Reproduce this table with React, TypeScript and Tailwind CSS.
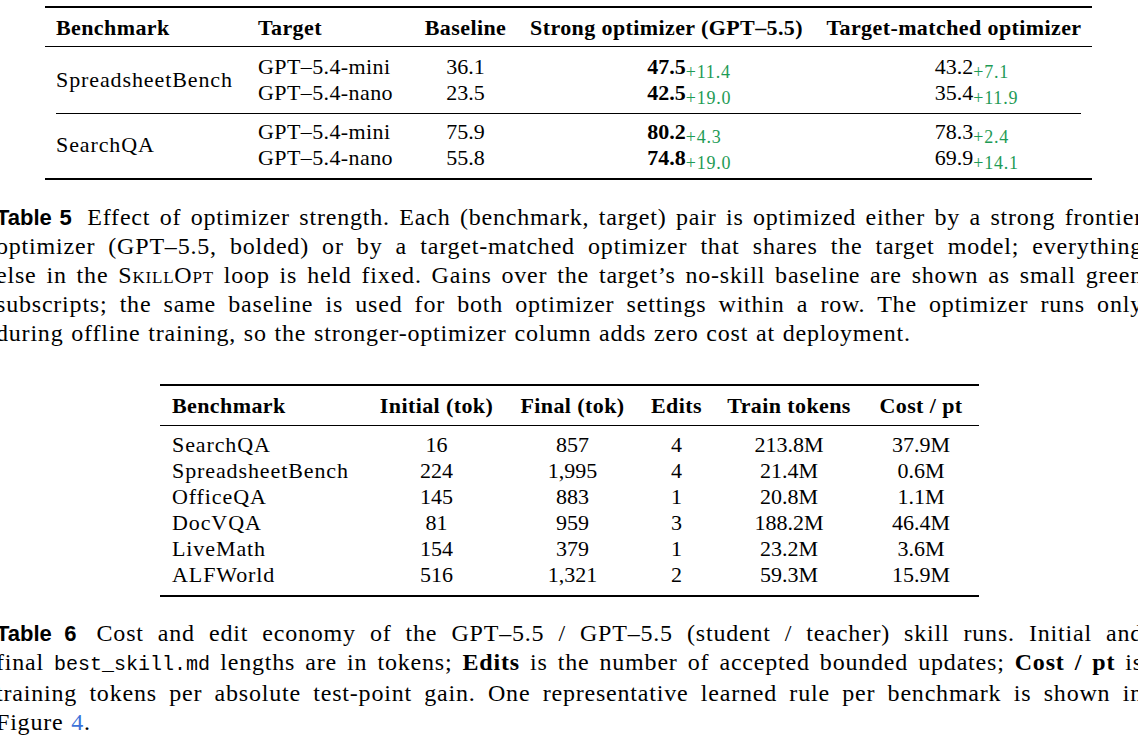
const serif = "font-['Liberation_Serif',serif]";

type Row5 = [string, string, string, string, string, string];

const table5: { bench: string; rows: Row5[] }[] = [
  {
    bench: "SpreadsheetBench",
    rows: [
      ["GPT–5.4-mini", "36.1", "47.5", "+11.4", "43.2", "+7.1"],
      ["GPT–5.4-nano", "23.5", "42.5", "+19.0", "35.4", "+11.9"],
    ],
  },
  {
    bench: "SearchQA",
    rows: [
      ["GPT–5.4-mini", "75.9", "80.2", "+4.3", "78.3", "+2.4"],
      ["GPT–5.4-nano", "55.8", "74.8", "+19.0", "69.9", "+14.1"],
    ],
  },
];

const table6 = [
  ["SearchQA", "16", "857", "4", "213.8M", "37.9M"],
  ["SpreadsheetBench", "224", "1,995", "4", "21.4M", "0.6M"],
  ["OfficeQA", "145", "883", "1", "20.8M", "1.1M"],
  ["DocVQA", "81", "959", "3", "188.2M", "46.4M"],
  ["LiveMath", "154", "379", "1", "23.2M", "3.6M"],
  ["ALFWorld", "516", "1,321", "2", "59.3M", "15.9M"],
];

const cols5 = "grid grid-cols-[201px_168px_103px_299px_276px]";
const cols6 = "grid grid-cols-[206px_141px_131px_77px_148px_116px]";

// number with a green gain hanging to the right (like \rlap)
function Gain({ value, gain, bold }: { value: string; gain: string; bold?: boolean }) {
  return (
    <span>
      <span className={bold ? "font-bold" : ""}>{value}</span>
      <span className="inline-block w-0 whitespace-nowrap align-[-4px] text-[18px] leading-none tracking-[0.8px] text-[#1e9b55]">
        {gain}
      </span>
    </span>
  );
}

function Line({ children, last }: { children: React.ReactNode; last?: boolean }) {
  return (
    <div
      className={
        "w-[1147px] -ml-[4px] whitespace-nowrap " +
        (last ? "text-left" : "text-justify [text-align-last:justify]")
      }
    >
      {children}
    </div>
  );
}

function Label({ children }: { children: React.ReactNode }) {
  return (
    <span className="mr-[6px] font-['Liberation_Sans',sans-serif] text-[22px] font-bold tracking-normal [word-spacing:0]">
      {children}
    </span>
  );
}

export default function App() {
  return (
    <div className={`w-[1138px] h-[750px] overflow-hidden bg-white text-black ${serif}`}>
      {/* Table 5 */}
      <div className="ml-[45px] w-[1047px] pt-[6px] text-[22px]">
        <div className="h-[2px] bg-black" />
        <div className={`${cols5} h-[38px] items-center font-bold tracking-[0.4px]`}>
          <div className="pl-[11px]">Benchmark</div>
          <div className="pl-[12px]">Target</div>
          <div className="text-center">Baseline</div>
          <div className="text-center">Strong optimizer (GPT–5.5)</div>
          <div className="text-center">Target-matched optimizer</div>
        </div>
        <div className="h-px bg-black" />
        {table5.map((g, gi) => (
          <div key={g.bench}>
            {gi > 0 && <div className="mx-[11px] h-px bg-black" />}
            <div
              className={`${cols5} auto-rows-[26px] leading-[26px] ${gi === 0 ? "pt-[7px] pb-[7px]" : "pt-[5px] pb-[7px]"}`}
            >
              <div className="row-span-2 flex items-center pl-[11px] tracking-[0.9px]">{g.bench}</div>
              {g.rows.map((r) => (
                <div key={r[0]} className="contents">
                  <div className="pl-[12px] tracking-[0.4px]">{r[0]}</div>
                  <div className="text-center">{r[1]}</div>
                  <div className="text-center">
                    <Gain value={r[2]} gain={r[3]} bold />
                  </div>
                  <div className="text-center">
                    <Gain value={r[4]} gain={r[5]} />
                  </div>
                </div>
              ))}
            </div>
          </div>
        ))}
        <div className="h-[2px] bg-black" />
      </div>

      {/* Caption 5 */}
      <div className="mt-[23px] text-[24px] leading-[29px] tracking-[0.8px] [word-spacing:1px]">
        <Line>
          <Label>Table 5</Label> Effect of optimizer strength. Each (benchmark, target) pair is optimized either by a strong frontier
        </Line>
        <Line>
          optimizer (GPT–5.5, bolded) or by a target-matched optimizer that shares the target model; everything
        </Line>
        <Line>
          else in the <span className="[font-variant-caps:small-caps]">SkillOpt</span> loop is held fixed. Gains over the target’s no-skill baseline are shown as small green
        </Line>
        <Line>
          subscripts; the same baseline is used for both optimizer settings within a row. The optimizer runs only
        </Line>
        <Line last>during offline training, so the stronger-optimizer column adds zero cost at deployment.</Line>
      </div>

      {/* Table 6 */}
      <div className="ml-[160px] mt-[36px] w-[819px] text-[22px]">
        <div className="h-[2px] bg-black" />
        <div className={`${cols6} h-[39px] items-center font-bold tracking-[0.4px]`}>
          <div className="pl-[12px]">Benchmark</div>
          <div className="text-center">Initial (tok)</div>
          <div className="text-center">Final (tok)</div>
          <div className="text-center">Edits</div>
          <div className="text-center">Train tokens</div>
          <div className="text-center">Cost / pt</div>
        </div>
        <div className="h-px bg-black" />
        <div className="pt-[6px] pb-[7px] leading-[26px]">
          {table6.map((r) => (
            <div key={r[0]} className={cols6}>
              <div className="pl-[12px] tracking-[0.9px]">{r[0]}</div>
              {r.slice(1).map((c, i) => (
                <div key={i} className="text-center">
                  {c}
                </div>
              ))}
            </div>
          ))}
        </div>
        <div className="h-[2px] bg-black" />
      </div>

      {/* Caption 6 */}
      <div className="mt-[22px] text-[24px] leading-[29px] tracking-[0.8px] [word-spacing:1px]">
        <Line>
          <Label>Table 6</Label> Cost and edit economy of the GPT–5.5 / GPT–5.5 (student / teacher) skill runs. Initial and
        </Line>
        <Line>
          final{" "}
          <span className="font-['Liberation_Mono',monospace] text-[20px] tracking-normal">best_skill.md</span>{" "}
          lengths are in tokens; <span className="font-bold">Edits</span> is the number of accepted bounded updates;{" "}
          <span className="font-bold">Cost / pt</span> is
        </Line>
        <Line>
          training tokens per absolute test-point gain. One representative learned rule per benchmark is shown in
        </Line>
        <Line last>
          Figure <span className="text-[#3d72d9]">4</span>.
        </Line>
      </div>
    </div>
  );
}
